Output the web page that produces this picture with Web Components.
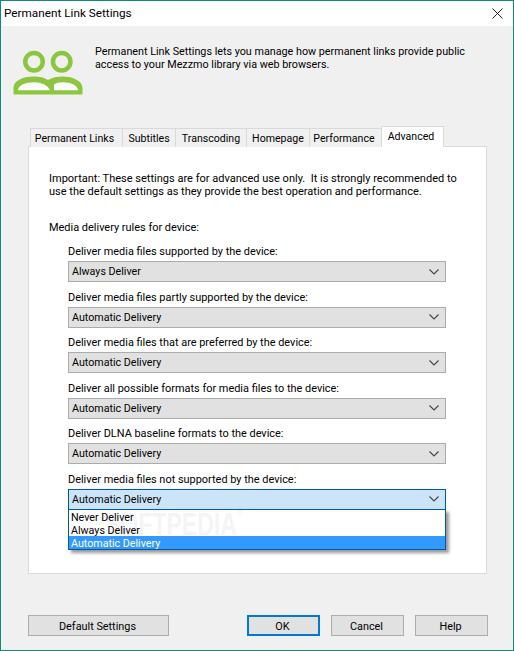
<!DOCTYPE html>
<html><head><meta charset="utf-8"><style>
html,body{margin:0;padding:0;background:#f0f0f0}
body{font:10.95px/13px Roboto,"Open Sans",sans-serif;color:#000;width:514px;height:651px;overflow:hidden}
</style></head><body>
<link-dialog title-text="Permanent Link Settings">
<span slot="intro">Permanent Link Settings lets you manage how permanent links provide public<br>access to your Mezzmo library via web browsers.</span>
<tab-strip slot="tabs"></tab-strip>
<span slot="note">Important: These settings are for advanced use only.&nbsp; It is strongly recommended to<br>use the default settings as they provide the best operation and performance.</span>
<span slot="rules">Media delivery rules for device:</span>
<combo-row slot="rows" label="Deliver media files supported by the device:" value="Always Deliver"></combo-row>
<combo-row slot="rows" label="Deliver media files partly supported by the device:" value="Automatic Delivery"></combo-row>
<combo-row slot="rows" label="Deliver media files that are preferred by the device:" value="Automatic Delivery"></combo-row>
<combo-row slot="rows" label="Deliver all possible formats for media files to the device:" value="Automatic Delivery"></combo-row>
<combo-row slot="rows" label="Deliver DLNA baseline formats to the device:" value="Automatic Delivery"></combo-row>
<combo-row slot="rows" label="Deliver media files not supported by the device:" value="Automatic Delivery" open></combo-row>
<dlg-button slot="left" style="width:141px">Default Settings</dlg-button>
<dlg-button slot="right" primary style="width:73px">OK</dlg-button>
<dlg-button slot="right" style="width:73px">Cancel</dlg-button>
<dlg-button slot="right" style="width:73px">Help</dlg-button>
</link-dialog>
<script>
const def=(n,c)=>customElements.define(n,c);
class Base extends HTMLElement{render(h){if(!this.shadowRoot)this.attachShadow({mode:'open'});this.shadowRoot.innerHTML=h}}
def('link-dialog',class extends Base{connectedCallback(){this.render(`<style>
:host{display:flex;flex-direction:column;box-sizing:border-box;width:514px;height:651px;border:1px solid #0f8a7c;background:#f0f0f0;position:relative;white-space:nowrap}
.title{height:25px;background:#fff;display:flex;align-items:center;justify-content:space-between;padding:0 10px 0 3px;flex:none;font-size:11.75px}
.head{height:98px;display:flex;flex:none;box-sizing:border-box;padding:18px 0 0 12px}
.head svg{width:72px;height:46px;margin-top:6px;flex:none}
.head .t{margin-left:10px;padding-top:1px;font-size:10.78px}
.tabs{margin-left:29px;flex:none;height:22px}
.panel{margin-left:27px;width:459px;height:428px;box-sizing:border-box;border:1px solid #d9d9d9;background:#fff;flex:none;padding:25px 0 0 20px}
.note{font-size:11.02px}
.rules{margin-top:23px;margin-bottom:11px;height:13px}
.rows{display:flex;flex-direction:column;margin-left:19px}
.foot{display:flex;justify-content:space-between;margin-top:41px;padding:0 25px 0 27px;font-size:10.85px}
.right{display:flex;gap:11px}
.wm{position:absolute;left:104px;top:505px;font:700 32px/36px "Liberation Sans",sans-serif;color:#000;opacity:.04;pointer-events:none;z-index:9;transform:scaleX(.72);transform-origin:0 0}
.wm span{font:400 12px/12px "Liberation Sans",sans-serif;vertical-align:top}
</style>
<div class="title"><span>${this.getAttribute('title-text')}</span>
<svg width="11" height="11" viewBox="0 0 11 11"><path d="M.5.5l10 10M10.5.5l-10 10" stroke="#222" fill="none"/></svg></div>
<div class="head"><svg viewBox="0 0 72 46">
<g fill="none" stroke="#8cc63f" stroke-width="4.500"><circle cx="21" cy="11.700" r="8.750"/><circle cx="48.700" cy="11.700" r="8.750"/></g>
<path d="M.5 44.500V38C.5 31 9 26.500 21 26.500C27 26.500 31 27.500 35 30C39 27.500 44 26.500 50 26.500C60 26.500 69.500 31 69.500 38V44.500Z" fill="#8cc63f"/>
<path d="M4.700 40.300C6 35 12 32.300 21 32.300C28 32.300 35 35 37 40.300ZM41 40.300V34.500C43 33 46 32.300 50 32.300C58 32.300 64 35 65.300 40.300Z" fill="#fff"/></svg>
<div class="t"><slot name="intro"></slot></div></div>
<div class="tabs"><slot name="tabs"></slot></div>
<div class="panel"><div class="note"><slot name="note"></slot></div><div class="rules"><slot name="rules"></slot></div><div class="rows"><slot name="rows"></slot></div></div>
<div class="foot"><slot name="left"></slot><div class="right"><slot name="right"></slot></div></div>
<div class="wm">SOFTPEDIA<span>®</span></div>`)}});
def('tab-strip',class extends Base{connectedCallback(){const t=[['Permanent Links',92,4],['Subtitles',53,0],['Transcoding',71,0],['Homepage',63,0],['Performance',72,3],['Advanced',63,3]];
this.render(`<style>:host{display:flex;height:22px;align-items:flex-end;position:relative;z-index:2;font-size:10.6px}
.t{box-sizing:border-box;height:19px;border:1px solid #d9d9d9;border-bottom:0;border-right:0;background:#f0f0f0;padding-top:3px;text-align:center;margin-bottom:-1px}
.a{height:21px;background:#fff;border:1px solid #d9d9d9;border-bottom:0;padding-top:3px;margin-bottom:-1px}
</style>`+t.map((x,i)=>`<div class="t${i==5?' a':''}" style="width:${x[1]}px;padding-right:${x[2]}px">${x[0]}</div>`).join(''))}});
def('combo-row',class extends Base{connectedCallback(){const o=this.hasAttribute('open');
this.render(`<style>:host{display:block;height:45.5px;position:relative}
.l{height:13px;margin-bottom:3px;font-size:10.93px}
.c{box-sizing:border-box;width:378px;height:21px;border:1px solid ${o?'#0058a8':'#acacac'};background:${o?'#cce4f7':'#e1e1e1'};display:flex;align-items:center;justify-content:space-between;padding:0 6px 0 3px;font-size:10.7px}
svg{width:10px;height:6px}
.m{position:absolute;left:0;top:36px;width:378px;box-sizing:border-box;border:1px solid #0058a8;background:#fff;height:41px;box-shadow:3px 3px 3px rgba(0,0,0,.4);z-index:5;font-size:10.7px}
.m div{height:13px;line-height:15px;padding-left:2px}.m .s{background:#3399ff;color:#fff}
</style><div class="l">${this.getAttribute('label')}</div><div class="c"><span>${this.getAttribute('value')}</span><svg viewBox="0 0 10 6"><path d="M.5.500L5 5 9.500.500" fill="none" stroke="#444" stroke-width="1.100"/></svg></div>
${o?`<div class="m"><div>Never Deliver</div><div>Always Deliver</div><div class="s">Automatic Delivery</div></div>`:''}`)}});
def('dlg-button',class extends Base{connectedCallback(){const p=this.hasAttribute('primary');
this.render(`<style>:host{display:flex;box-sizing:border-box;height:21px;padding:2px 2px 0 0;align-items:center;justify-content:center;background:#e1e1e1;border:${p?'2px solid #0078d7':'1px solid #adadad'}}</style><slot></slot>`)}});
</script></body></html>
